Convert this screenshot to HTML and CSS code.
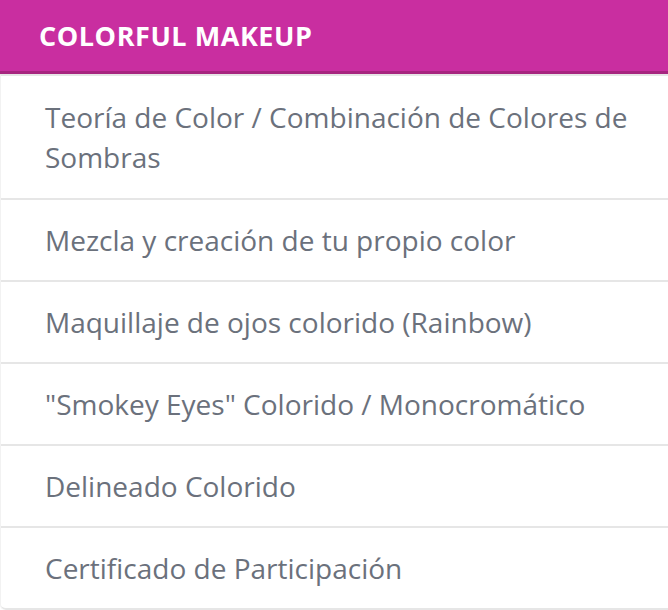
FILE: index.html
```html
<!DOCTYPE html>
<html lang="es">
<head>
<meta charset="utf-8">
<title>Colorful Makeup</title>
<link rel="stylesheet" href="styles.css">
</head>
<body>
<section class="module">
  <h2 class="module-title">COLORFUL MAKEUP</h2>
  <ul class="lessons">
    <li class="lesson">Teoría de Color / Combinación de Colores de Sombras</li>
    <li class="lesson">Mezcla y creación de tu propio color</li>
    <li class="lesson">Maquillaje de ojos colorido (Rainbow)</li>
    <li class="lesson">"Smokey Eyes" Colorido / Monocromático</li>
    <li class="lesson">Delineado Colorido</li>
    <li class="lesson">Certificado de Participación</li>
  </ul>
</section>
</body>
</html>
```

FILE: styles.css
```css
html, body {
  margin: 0;
  padding: 0;
  background: #ffffff;
}

body {
  font-family: "Open Sans", "Liberation Sans", sans-serif;
}

.module {
  width: 668px;
}

.module-title {
  margin: 0;
  height: 71px;
  display: flex;
  align-items: center;
  padding-left: 39px;
  background: #c92ea0;
  border-bottom: 3px solid #a6257f;
  color: #ffffff;
  font-size: 27px;
  font-weight: 700;
  letter-spacing: 0.55px;
}

.lessons {
  list-style: none;
  margin: 0;
  padding: 0;
  border-top: 2px solid #e6e6e6;
  border-left: 1px solid #f2f2f2;
  border-bottom-left-radius: 5px;
}

.lesson {
  padding: 20px 20px 20px 44px;
  font-size: 28px;
  line-height: 40px;
  color: #6b717c;
  border-bottom: 2px solid #e6e6e6;
}

.lesson:first-child {
  padding-top: 21px;
  padding-bottom: 21px;
}

.lesson:last-child {
  border-bottom-left-radius: 5px;
}
```
